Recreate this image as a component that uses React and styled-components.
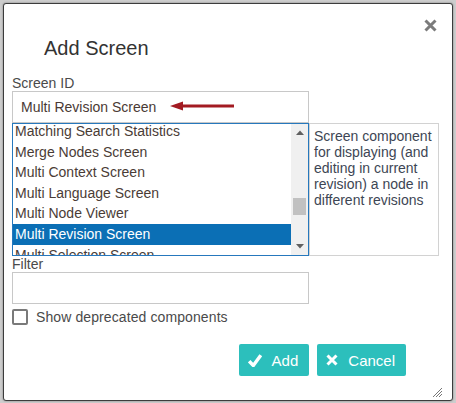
import React from 'react'
import styled, { createGlobalStyle } from 'styled-components'

const GlobalStyle = createGlobalStyle`
  html, body {
    margin: 0;
    padding: 0;
    background: #cdcdcd;
    font-family: "Liberation Sans", Arial, sans-serif;
  }
`

const Page = styled.div`
  padding: 3px;
`

const Dialog = styled.div`
  position: relative;
  box-sizing: border-box;
  width: 450px;
  height: 398px;
  background: #fff;
  border: 1px solid #3c3c3c;
  border-radius: 3px;
  box-shadow: 0 0 2px rgba(0, 0, 0, 0.45);
  padding: 0 8px;
  color: #444;
  font-size: 14px;
`

const Header = styled.div`
  display: flex;
  justify-content: space-between;
  align-items: flex-start;
  height: 56px;
  margin-bottom: 15px;
`

const Title = styled.h1`
  margin: 31px 0 0 32px;
  font-size: 20px;
  line-height: 26px;
  font-weight: normal;
  color: #333;
`

const CloseButton = styled.button`
  margin: 15px 7px 0 0;
  padding: 0;
  border: 0;
  background: none;
  width: 13px;
  height: 13px;
  display: flex;
  cursor: pointer;
`

const Label = styled.label`
  display: block;
  height: 16px;
  line-height: 16px;
  color: #4a4a4a;
`

const InputWrap = styled.div`
  position: relative;
  width: 297px;
`

const TextInput = styled.input`
  box-sizing: border-box;
  display: block;
  width: 297px;
  height: 32px;
  border: 1px solid #c8c8c8;
  padding: 0 8px;
  font: inherit;
  font-size: 14px;
  color: #4a3a34;
  outline: none;
`

const Pointer = styled.svg`
  position: absolute;
  left: 158px;
  top: 10px;
`

const PickerRow = styled.div`
  display: flex;
  height: 133px;
`

const ListBox = styled.div`
  box-sizing: border-box;
  width: 297px;
  border: 1px solid #2678bd;
  display: flex;
  overflow: hidden;
`

const Options = styled.div`
  flex: 1;
  overflow: hidden;
`

const OptionList = styled.ul`
  list-style: none;
  margin: 0;
  padding: 0;
`

const Option = styled.li`
  height: 20.6px;
  line-height: 20.6px;
  padding-left: 2px;
  white-space: nowrap;
  color: ${(p) => (p.selected ? '#fff' : '#4a3c36')};
  background: ${(p) => (p.selected ? '#0b6fb5' : 'transparent')};
`

const ScrollBar = styled.div`
  width: 17px;
  background: #f0f0f0;
  display: flex;
  flex-direction: column;
`

const ScrollArrow = styled.div`
  height: 17px;
  display: flex;
  align-items: center;
  justify-content: center;
`

const ScrollTrack = styled.div`
  flex: 1;
`

const Thumb = styled.div`
  width: 13px;
  height: 17px;
  margin: 0 2px;
  background: #c1c1c1;
`

const Description = styled.div`
  box-sizing: border-box;
  width: 130px;
  border: 1px solid #d2d2d2;
  padding: 4px 4px 0;
  line-height: 16px;
  color: #3d4654;
`

const CheckRow = styled.label`
  display: flex;
  align-items: center;
  gap: 8px;
  margin-top: 5px;
  height: 16px;
  color: #4a4a4a;
  letter-spacing: 0.1px;
`

const Box = styled.span`
  box-sizing: border-box;
  width: 16px;
  height: 16px;
  border: 2px solid #7a7a7a;
  border-radius: 2px;
  background: #fff;
`

const Actions = styled.div`
  display: flex;
  justify-content: flex-end;
  gap: 8px;
  margin-top: 19px;
  padding-right: 38px;
`

const Button = styled.button`
  display: flex;
  align-items: center;
  gap: 10px;
  height: 32px;
  padding: 0 11px 0 9px;
  border: 0;
  border-radius: 2px;
  background: #2cbfbc;
  color: #fff;
  font-family: "Liberation Sans", Arial, sans-serif;
  font-size: 15px;
  cursor: pointer;
`

const Grip = styled.svg`
  position: absolute;
  right: 9px;
  bottom: 3px;
`

const items = [
  'Matching Search Statistics',
  'Merge Nodes Screen',
  'Multi Context Screen',
  'Multi Language Screen',
  'Multi Node Viewer',
  'Multi Revision Screen',
  'Multi Selection Screen',
]

export default function App() {
  const selected = 'Multi Revision Screen'
  return (
    <Page>
      <GlobalStyle />
      <Dialog>
        <Header>
          <Title>Add Screen</Title>
          <CloseButton aria-label="Close">
            <svg width="13" height="13" viewBox="0 0 13 13">
              <path d="M1.5 1.5 L11.5 11.5 M11.5 1.5 L1.5 11.5" stroke="#7b7b7b" strokeWidth="3" />
            </svg>
          </CloseButton>
        </Header>

        <Label>Screen ID</Label>
        <InputWrap>
          <TextInput defaultValue={selected} />
          <Pointer width="64" height="10" viewBox="0 0 64 10">
            <path d="M0 5 L13 0.5 L13 3.6 L64 3.6 L64 6.4 L13 6.4 L13 9.5 Z" fill="#a31b22" />
          </Pointer>
        </InputWrap>

        <PickerRow>
          <ListBox>
            <Options>
              <OptionList style={{ marginTop: -3 }}>
                {items.map((it) => (
                  <Option key={it} selected={it === selected}>{it}</Option>
                ))}
              </OptionList>
            </Options>
            <ScrollBar>
              <ScrollArrow>
                <svg width="8" height="5" viewBox="0 0 8 5"><path d="M0 5 L4 0.5 L8 5 Z" fill="#606060" /></svg>
              </ScrollArrow>
              <ScrollTrack>
                <Thumb style={{ marginTop: 57 }} />
              </ScrollTrack>
              <ScrollArrow>
                <svg width="8" height="5" viewBox="0 0 8 5"><path d="M0 0 L8 0 L4 4.5 Z" fill="#606060" /></svg>
              </ScrollArrow>
            </ScrollBar>
          </ListBox>
          <Description>
            Screen component for displaying (and editing in current revision) a node in different revisions
          </Description>
        </PickerRow>

        <Label>Filter</Label>
        <TextInput />

        <CheckRow>
          <Box />
          Show deprecated components
        </CheckRow>

        <Actions>
          <Button>
            <svg width="14" height="13" viewBox="0 0 14 13">
              <path d="M1.2 7.2 L5.3 11.5 L12.8 1.2" stroke="#fff" strokeWidth="3.4" fill="none" />
            </svg>
            Add
          </Button>
          <Button>
            <svg width="12" height="12" viewBox="0 0 12 12">
              <path d="M1.5 1.5 L10.5 10.5 M10.5 1.5 L1.5 10.5" stroke="#fff" strokeWidth="3" />
            </svg>
            Cancel
          </Button>
        </Actions>

        <Grip width="12" height="10" viewBox="0 0 12 10">
          <path d="M2 10 L11 1 M5 10 L11 4 M8 10 L11 7" stroke="#777" strokeWidth="1" />
        </Grip>
      </Dialog>
    </Page>
  )
}
